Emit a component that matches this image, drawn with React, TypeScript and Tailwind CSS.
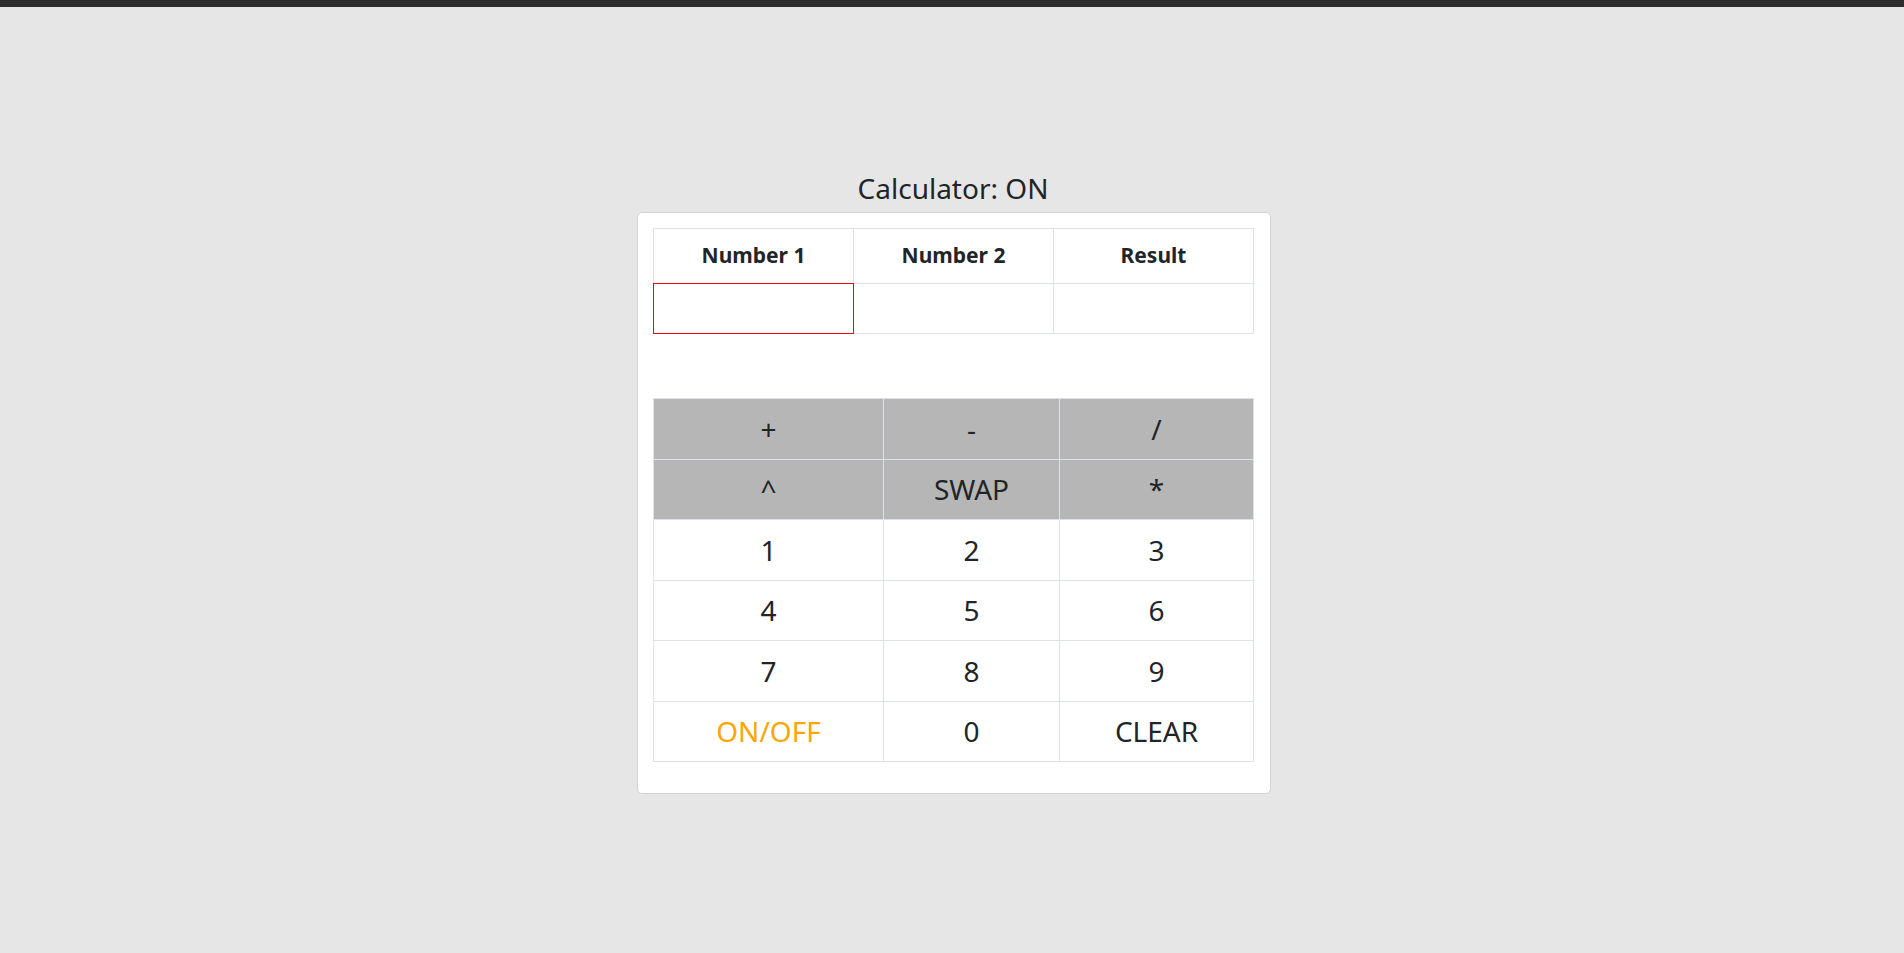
import { useState } from 'react';

const keys: { label: string; op?: boolean; accent?: boolean }[][] = [
  [{ label: '+', op: true }, { label: '-', op: true }, { label: '/', op: true }],
  [{ label: '^', op: true }, { label: 'SWAP', op: true }, { label: '*', op: true }],
  [{ label: '1' }, { label: '2' }, { label: '3' }],
  [{ label: '4' }, { label: '5' }, { label: '6' }],
  [{ label: '7' }, { label: '8' }, { label: '9' }],
  [{ label: 'ON/OFF', accent: true }, { label: '0' }, { label: 'CLEAR' }],
];

export default function App() {
  const [num1, setNum1] = useState('');

  return (
    <div className="min-h-screen bg-[#e6e6e6] text-[#212529] font-['Noto_Sans',sans-serif]">
      {/* top strip */}
      <div className="h-[7px] bg-[#2d2d2d]" />

      <div className="flex flex-col items-center pt-[164px] pl-[4px]">
        {/* Title */}
        <div className="-ml-[2px] flex h-[34px] items-center text-[28px] leading-none">Calculator: ON</div>

        {/* Card */}
        <div className="mt-[7px] w-[634px] rounded-[5px] border border-[#d4d4d4] bg-white p-[15px]">
          {/* Numbers table */}
          <div className="w-[601px] border-l border-t border-[#dee2e6]">
            <div className="grid grid-cols-3">
              {['Number 1', 'Number 2', 'Result'].map((h) => (
                <div
                  key={h}
                  className="flex h-[55px] items-center justify-center border-b border-r border-[#dee2e6] text-[21px] font-bold"
                >
                  {h}
                </div>
              ))}
            </div>
            <div className="grid grid-cols-3">
              <div className="h-[50px] border-b border-r border-[#dee2e6]">
                <input
                  value={num1}
                  onChange={(e) => setNum1(e.target.value)}
                  className="relative -ml-px -mt-px block h-[51px] w-[calc(100%+2px)] border border-[#ff0000] bg-white px-2 text-[21px] outline-none"
                />
              </div>
              <div className="h-[50px] border-b border-r border-[#dee2e6]" />
              <div className="h-[50px] border-b border-r border-[#dee2e6]" />
            </div>
          </div>

          {/* Keypad */}
          <div className="mt-[64px] mb-[16px] w-[601px] border-l border-t border-[#dee2e6]">
            {keys.map((row, i) => (
              <div key={i} className="grid grid-cols-[230px_176px_194px]">
                {row.map((k) => (
                  <button
                    key={k.label}
                    className={
                      'flex h-[60.5px] items-center justify-center border-b border-r border-[#dee2e6] text-[28px] ' +
                      (k.op ? 'bg-[#b6b6b6] ' : 'bg-white ') +
                      (k.accent ? 'text-[#ffa500]' : 'text-[#212529]')
                    }
                  >
                    {k.label}
                  </button>
                ))}
              </div>
            ))}
          </div>
        </div>
      </div>
    </div>
  );
}
